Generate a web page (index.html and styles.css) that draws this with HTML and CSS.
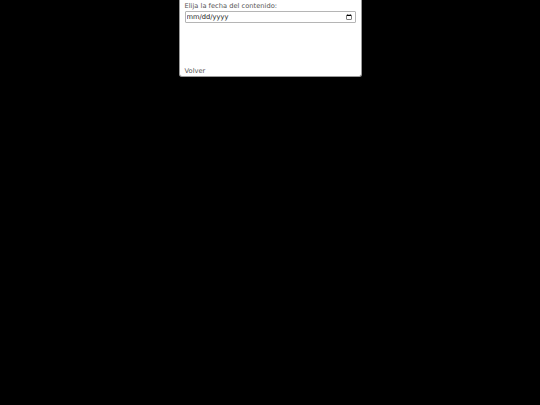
FILE: index.html
```html
<!DOCTYPE html>
<html lang="es">
<head>
<meta charset="utf-8">
<link rel="stylesheet" href="styles.css">
</head>
<body>
<div class="panel">
  <label class="label" for="fecha">Elija la fecha del contenido:</label>
  <input class="date" id="fecha" type="date">
  <div class="spacer"></div>
  <a class="back">Volver</a>
</div>
</body>
</html>
```
FILE: styles.css
```css
html, body {
  margin: 0;
  background: #000;
  height: 100%;
}
body {
  font-family: "DejaVu Sans", sans-serif;
  font-size: 6.7px;
}
.panel {
  margin: 0 auto;
  background: #fff;
  border: 1px solid #9a9a9a;
  border-top: none;
  border-radius: 0 0 3px 3px;
  padding: 0 5px;
  height: 77px;
  box-sizing: border-box;
  width: 183px;
  display: flex;
  flex-direction: column;
}
.label {
  display: block;
  color: #555;
  line-height: 9px;
  padding-top: 2px;
}
.date {
  display: block;
  box-sizing: border-box;
  width: 100%;
  height: 12px;
  margin: 0;
  padding: 0 0 0 1px;
  font-family: "DejaVu Sans", sans-serif;
  font-size: 6.7px;
  color: #1a1a1a;
  border: 1px solid #b5b5b5;
  border-radius: 1px;
  background: #fff;
}
.date::-webkit-datetime-edit-fields-wrapper,
.date::-webkit-datetime-edit {
  padding: 0;
}
.date::-webkit-datetime-edit-month-field,
.date::-webkit-datetime-edit-day-field,
.date::-webkit-datetime-edit-year-field {
  padding: 0;
}
.date::-webkit-datetime-edit-text {
  padding: 0;
}
.spacer {
  flex: 1;
}
.back {
  color: #555;
  line-height: 9px;
  padding-bottom: 0;
}
```
